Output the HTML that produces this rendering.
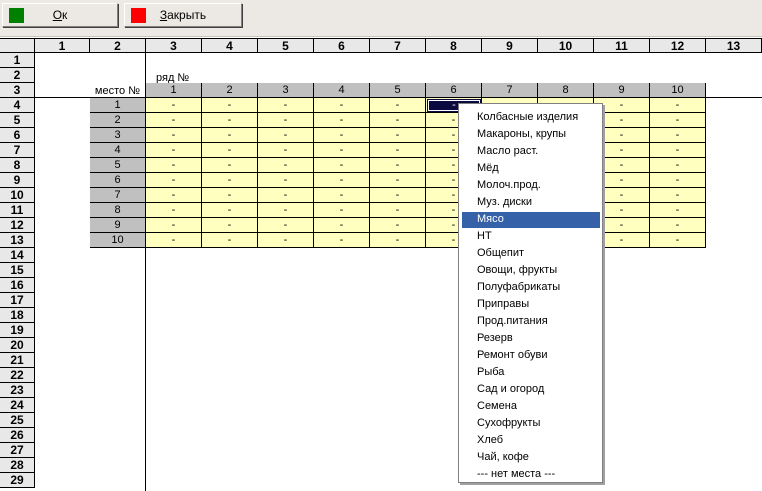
<!DOCTYPE html>
<html><head><meta charset="utf-8"><style>
*{margin:0;padding:0;box-sizing:border-box}
body{width:762px;height:491px;overflow:hidden;background:#fff;font-family:"Liberation Sans",Arial,sans-serif;font-size:11px;position:relative}
.a{position:absolute}
#tb{left:0;top:0;width:762px;height:37px;background:#ece9e4;border-bottom:1px solid #c8c4bc}
.btn{top:3px;height:24px;background:#ece9e4;border:1px solid;border-color:#fff #808080 #808080 #fff;box-shadow:1px 1px 0 #404040;font-size:12px;text-align:center;line-height:22px}
.sq{position:absolute;left:6px;top:4px;width:15px;height:15px}
.h{background:#e8e8e8;border-right:1px solid #000;border-bottom:1px solid #000;font-weight:bold;text-align:center;line-height:14px;font-size:12px}
.c{border-right:1px solid #000;border-bottom:1px solid #000;text-align:center;line-height:14px}
.y{background:#ffffc0}.g{background:#c0c0c0}
#pop{left:458px;top:103px;width:145px;height:380px;background:#fff;border:1px solid #808080;box-shadow:2px 2px 0 #a0a0a0}
.it{position:absolute;left:18px;font-size:11px;line-height:17px}
</style></head><body>
<div id="tb" class="a"></div>
<div class="a btn" style="left:2px;width:116px"><span class="sq" style="background:#008000"></span><u>О</u>к</div>
<div class="a btn" style="left:124px;width:118px"><span class="sq" style="background:#ff0000"></span><u>З</u>акрыть</div>
<div id="g"></div>
<div id="pop" class="a"></div>
<script>
var s='';
var cx=[35,90,146,202,258,314,370,426,482,538,594,650,706,762];
function d(x,y,w,h,cls,t,st){s+='<div class="a '+cls+'" style="left:'+x+'px;top:'+y+'px;width:'+w+'px;height:'+h+'px;'+(st||'')+'">'+(t||'')+'</div>';}
d(0,37,762,1,'','', 'background:#fff');
d(0,38,35,15,'h','','border-top:1px solid #000');
for(var i=0;i<13;i++)d(cx[i],38,cx[i+1]-cx[i],15,'h',i+1,'border-top:1px solid #000');
for(var r=1;r<=29;r++)d(0,53+(r-1)*15,35,15,'h',r);
// row 1-3 lines
d(35,97,727,1,'','','background:#000');
d(145,53,1,438,'','','background:#000');
d(146,68,100,15,'','ряд №','padding-left:10px;line-height:20px');
d(35,83,110,15,'','место №','text-align:right;padding-right:5px;line-height:16px');
for(var j=0;j<10;j++)d(cx[2+j],83,56,15,'c g',j+1);
for(var r=0;r<10;r++){d(90,98+r*15,56,15,'c g',r+1);for(var j=0;j<10;j++)d(cx[2+j],98+r*15,56,15,'c y','-');}
d(427,99,54,13,'','-','background:#0a0a40;color:#fff;text-align:center;line-height:12px;outline:1px solid #fff;outline-offset:-2px');
document.getElementById('g').innerHTML=s;
var items=['Колбасные изделия','Макароны, крупы','Масло раст.','Мёд','Молоч.прод.','Муз. диски','Мясо','НТ','Общепит','Овощи, фрукты','Полуфабрикаты','Приправы','Прод.питания','Резерв','Ремонт обуви','Рыба','Сад и огород','Семена','Сухофрукты','Хлеб','Чай, кофе','--- нет места ---'];
var p='';
items.forEach(function(t,i){var top=5+i*17;if(i==6)p+='<div class="a" style="left:3px;top:'+(top+1)+'px;width:138px;height:16px;background:#3461a8"></div>';p+='<div class="it" style="top:'+top+'px;'+(i==6?'color:#fff':'')+'">'+t+'</div>';});
document.getElementById('pop').innerHTML=p;
</script>
</body></html>
